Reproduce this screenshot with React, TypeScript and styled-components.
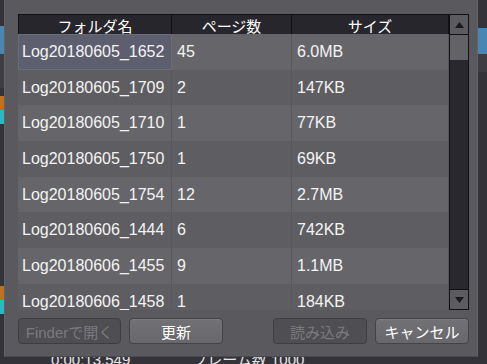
import React from 'react'
import styled, { createGlobalStyle } from 'styled-components';

const GlobalStyle = createGlobalStyle`
    html, body {
        margin: 0;
        padding: 0;
        background: #2f2e34;
        overflow: hidden;
    }
    * {
        box-sizing: border-box;
    }
`;

const FONT = `"Liberation Sans", "Noto Sans CJK JP", sans-serif`;

const Backdrop = styled.div`
    position: relative;
    width: 487px;
    height: 364px;
    background: #34333a;
    font-family: ${FONT};
    overflow: hidden;
`;

const Stripe = styled.div<{ $top: number; $height: number; $color: string; $right?: boolean }>`
    position: absolute;
    top: ${p => p.$top}px;
    height: ${p => p.$height}px;
    width: 10px;
    ${p => (p.$right ? 'right: 0;' : 'left: 0;')}
    background: ${p => p.$color};
`;

const BehindText = styled.div`
    position: absolute;
    left: 51px;
    top: 351px;
    display: flex;
    gap: 62px;
    color: #e6e6e6;
    font-size: 15px;
    line-height: 18px;
`;

const Dialog = styled.div`
    position: absolute;
    left: 4px;
    top: 0;
    width: 474px;
    height: 357px;
    background: #5a595d;
    border-left: 1px solid #646367;
    border-right: 1px solid #646367;
    border-bottom: 1px solid #4a494d;
    padding: 14px 8px 0 13px;
    display: flex;
    flex-direction: column;
`;

const TableArea = styled.div`
    display: flex;
    height: 296px;
    width: 451px;
`;

const Grid = styled.div`
    flex: 1;
    display: flex;
    flex-direction: column;
    overflow: hidden;
`;

const COLS = '154px 120px 157px';

const HeaderRow = styled.div`
    display: grid;
    grid-template-columns: ${COLS};
    height: 20px;
    flex-shrink: 0;
`;

const HeaderCell = styled.div`
    background: #27262d;
    border: 1px solid #121116;
    border-left-width: 0;
    color: #ffffff;
    font-size: 15px;
    display: flex;
    align-items: center;
    justify-content: center;
    &:first-child {
        border-left-width: 1px;
    }
`;

const Row = styled.div<{ $odd: boolean }>`
    display: grid;
    grid-template-columns: ${COLS};
    height: 35.7px;
    flex-shrink: 0;
    background: ${p => (p.$odd ? '#666569' : '#5e5d61')};
`;

const Cell = styled.div<{ $focused?: boolean }>`
    display: flex;
    align-items: center;
    padding-left: 5px;
    color: #f4f4f4;
    font-size: 16px;
    border-right: 1px solid #58575b;
    ${p =>
        p.$focused &&
        `
        background: #5d5e6e;
        border: 1px solid #6a6b7e;
    `}
    &:first-child {
        padding-left: ${p => (p.$focused ? '3px' : '4px')};
    }
`;

const ScrollBar = styled.div`
    width: 20px;
    display: flex;
    flex-direction: column;
    background: #29282f;
    border: 1px solid #111015;
`;

const ArrowButton = styled.div`
    height: 20px;
    background: #5c5b5f;
    border-bottom: 1px solid #111015;
    display: flex;
    align-items: center;
    justify-content: center;
    &:last-child {
        border-bottom: 0;
        border-top: 1px solid #111015;
    }
`;

const Thumb = styled.div`
    height: 25px;
    background: #636266;
`;

const Track = styled.div`
    flex: 1;
`;

const Buttons = styled.div`
    display: flex;
    margin-top: 8px;
    height: 26px;
    gap: 8px;
`;

const Spacer = styled.div`
    flex: 1;
`;

const Button = styled.div<{ $width: number; $disabled?: boolean }>`
    width: ${p => p.$width}px;
    height: 26px;
    border-radius: 4px;
    display: flex;
    align-items: center;
    justify-content: center;
    font-size: 15px;
    border: 1px solid ${p => (p.$disabled ? '#3e3d41' : '#444347')};
    background: ${p => (p.$disabled ? '#4f4e52' : 'linear-gradient(#727175, #68676b)')};
    color: ${p => (p.$disabled ? '#7b7a7e' : '#ffffff')};
    box-shadow: ${p => (p.$disabled ? 'none' : 'inset 0 1px 0 #7c7b7f')};
`;

const rows = [
    ['Log20180605_1652', '45', '6.0MB'],
    ['Log20180605_1709', '2', '147KB'],
    ['Log20180605_1710', '1', '77KB'],
    ['Log20180605_1750', '1', '69KB'],
    ['Log20180605_1754', '12', '2.7MB'],
    ['Log20180606_1444', '6', '742KB'],
    ['Log20180606_1455', '9', '1.1MB'],
    ['Log20180606_1458', '1', '184KB'],
];

const Triangle = ({ up }: { up: boolean }) => (
    <svg width="9" height="6" viewBox="0 0 9 6">
        <polygon points={up ? '4.5,0 9,6 0,6' : '0,0 9,0 4.5,6'} fill="#1b1a1f"/>
    </svg>
);

export default () => (
    <Backdrop>
        <GlobalStyle/>
        <Stripe $top={26} $height={28} $color="#4a86b4"/>
        <Stripe $top={54} $height={34} $color="#3e3d43"/>
        <Stripe $top={96} $height={14} $color="#c0701c"/>
        <Stripe $top={110} $height={14} $color="#27b9c4"/>
        <Stripe $top={286} $height={14} $color="#c0701c"/>
        <Stripe $top={300} $height={14} $color="#27b9c4"/>
        <Stripe $right $top={28} $height={26} $color="#4a86b4"/>
        <Stripe $right $top={54} $height={18} $color="#3e3d43"/>
        <BehindText>
            <span>0:00:13.549</span>
            <span>フレーム数 1000</span>
        </BehindText>
        <Dialog>
            <TableArea>
                <Grid>
                    <HeaderRow>
                        <HeaderCell>フォルダ名</HeaderCell>
                        <HeaderCell>ページ数</HeaderCell>
                        <HeaderCell>サイズ</HeaderCell>
                    </HeaderRow>
                    {rows.map((r, i) => (
                        <Row key={r[0]} $odd={i % 2 === 0}>
                            <Cell $focused={i === 0}>{r[0]}</Cell>
                            <Cell>{r[1]}</Cell>
                            <Cell>{r[2]}</Cell>
                        </Row>
                    ))}
                </Grid>
                <ScrollBar>
                    <ArrowButton><Triangle up/></ArrowButton>
                    <Thumb/>
                    <Track/>
                    <ArrowButton><Triangle up={false}/></ArrowButton>
                </ScrollBar>
            </TableArea>
            <Buttons>
                <Button $width={103} $disabled>Finderで開く</Button>
                <Button $width={94}>更新</Button>
                <Spacer/>
                <Button $width={94} $disabled>読み込み</Button>
                <Button $width={94}>キャンセル</Button>
            </Buttons>
        </Dialog>
    </Backdrop>
)
